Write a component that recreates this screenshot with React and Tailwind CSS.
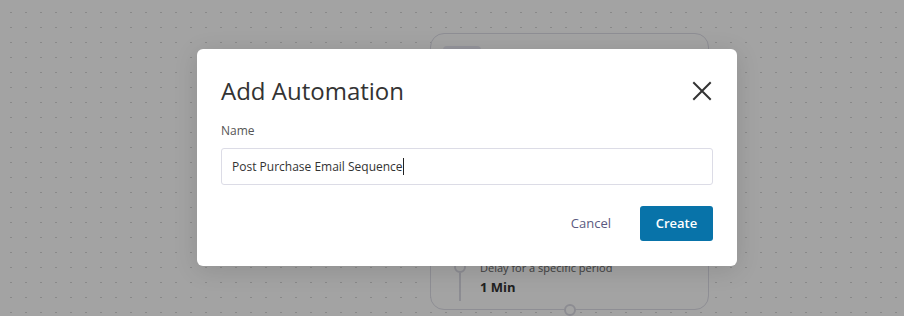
import React from 'react';

const X = () => (
    <svg width="20" height="20" viewBox="0 0 20 20" fill="none" stroke="#333" strokeWidth="2" strokeLinecap="square">
        <path d="M2 2 L18 18 M18 2 L2 18" />
    </svg>
);

const App = () => {
    return (
        <div
            className="relative w-[904px] h-[316px] overflow-hidden bg-white"
            style={{ fontFamily: '"Open Sans", "Noto Sans", sans-serif' }}
        >
            {/* rejilla de puntos del lienzo */}
            <div className="absolute inset-0 bg-[radial-gradient(ellipse_1px_0.6px_at_1px_0.5px,#d6d6d6_100%,transparent_100%)] bg-[length:15px_15px] bg-[position:10px_12px]" />

            {/* nodo del flujo detrás del modal */}
            <div className="absolute left-[430px] top-[33px] w-[279px] h-[277px] rounded-[14px] border border-[#dedee8] bg-white">
                <div className="ml-[12px] mt-[12px] w-[38px] h-[20px] rounded-[4px] bg-[#e8e8f2]" />
                <div className="absolute left-[23px] top-[227px] flex flex-col items-center">
                    <div className="w-[12px] h-[12px] rounded-full border-2 border-[#dcdce4] bg-white" />
                    <div className="w-[2px] h-[28px] bg-[#dcdce4]" />
                </div>
                <div className="absolute left-[49px] top-[226px]">
                    <p className="text-[11px] leading-[16px] text-[#666]">Delay for a specific period</p>
                    <p className="mt-[2px] text-[13px] leading-[18px] font-bold text-[#333]">1 Min</p>
                </div>
                <div className="absolute left-[133px] top-[270px] w-[12px] h-[12px] rounded-full border-2 border-[#dcdce4] bg-white" />
            </div>

            {/* overlay + modal */}
            <div className="absolute inset-0 bg-black/[0.36] pl-[197px] pt-[49px]">
                <div className="w-[540px] h-[217px] rounded-[6px] bg-white px-[24px] pt-[24px] shadow-[0_4px_24px_rgba(0,0,0,0.12)]">
                    <div className="flex items-center justify-between">
                        <h2 className="text-[24px] leading-[36px] text-[#333] font-normal">Add Automation</h2>
                        <button className="mr-[1px]"><X /></button>
                    </div>
                    <label className="block mt-[13px] text-[12px] leading-[18px] text-[#555]">Name</label>
                    <div className="mt-[8px] h-[37px] rounded-[3px] border border-[#dcdce6] flex items-center px-[10px]">
                        <span className="text-[12px] text-[#333]">Post Purchase Email Sequence</span>
                        <span className="w-px h-[17px] bg-[#222]" />
                    </div>
                    <div className="mt-[21px] flex items-center justify-end gap-[29px]">
                        <button className="text-[13px] text-[#5a5a80]">Cancel</button>
                        <button className="h-[35px] w-[73px] rounded-[3px] bg-[#0873a9] text-[13px] font-semibold text-white">Create</button>
                    </div>
                </div>
            </div>
        </div>
    );
};

export default App;
